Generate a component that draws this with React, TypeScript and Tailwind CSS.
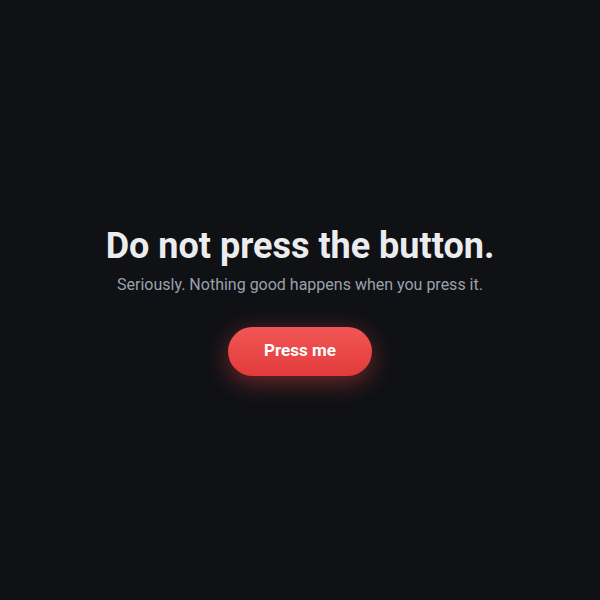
export default function App() {
  return (
    <div
      className="flex min-h-screen w-full flex-col items-center justify-center bg-[#0f1115] text-center"
      style={{ fontFamily: "Roboto, 'Liberation Sans', sans-serif" }}
    >
      <h1 className="text-[36px] font-bold leading-[42px] text-[#ececef]">Do not press the button.</h1>
      <p className="mt-1.5 text-[16px] leading-6 text-[#9ca0aa]">Seriously. Nothing good happens when you press it.</p>
      <button className="mt-[30px] h-[49px] w-[144px] rounded-full bg-gradient-to-b from-[#f25555] to-[#e23b3b] text-[17px] font-bold text-white shadow-[0_6px_24px_rgba(239,68,68,0.45)]">
        Press me
      </button>
    </div>
  );
}
